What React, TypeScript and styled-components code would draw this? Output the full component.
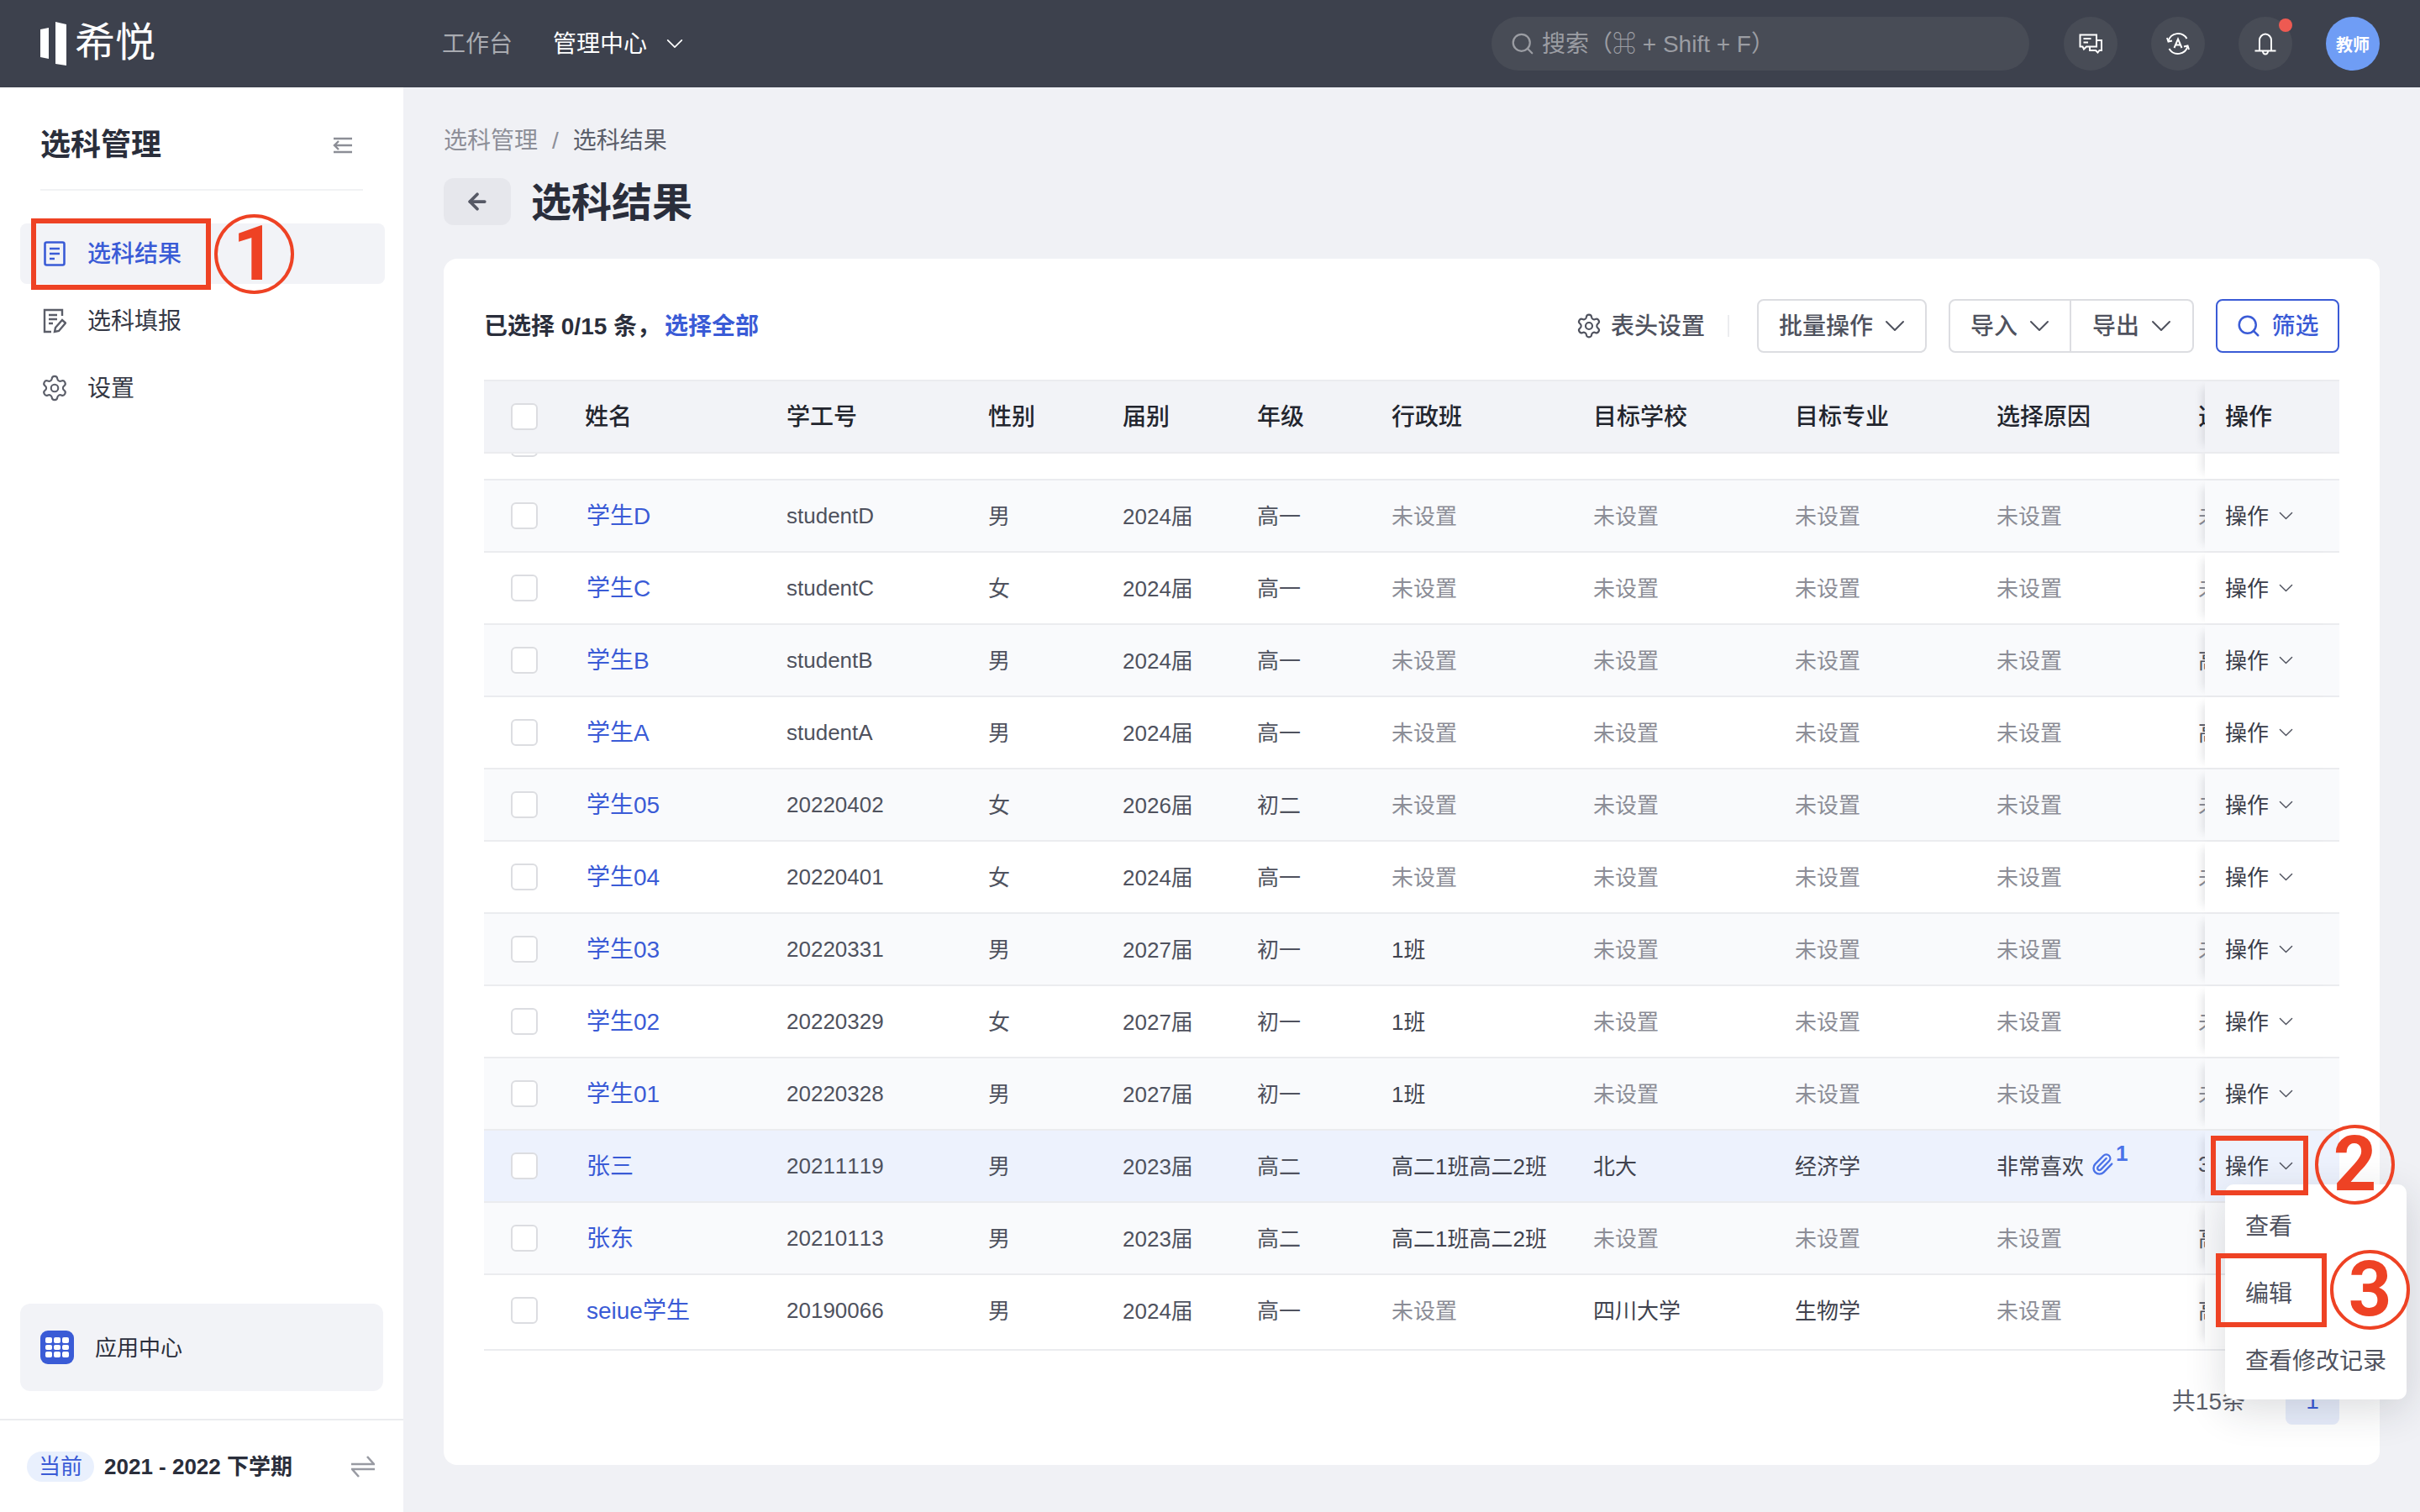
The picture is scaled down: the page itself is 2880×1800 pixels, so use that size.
import React from 'react'
import styled, { createGlobalStyle } from 'styled-components'
import { ArrowLeft, Paperclip, Search, Settings } from 'lucide-react'

const red = '#ee4224'
const blue = '#3a5bd6'
const lineColor = '#ebecef'

const GlobalStyle = createGlobalStyle`
  html, body {
    margin: 0;
    padding: 0;
    height: 100%;
    overflow: hidden;
  }
  body {
    font-family: "Liberation Sans", "Noto Sans CJK SC", sans-serif;
    color: #2a2e3b;
  }
  * {
    box-sizing: border-box;
  }
`

const Page = styled.div`
  position: relative;
  width: 2880px;
  height: 1800px;
  display: flex;
  flex-direction: column;
  overflow: hidden;
  background-color: #f0f1f5;
`

// the CJK fallback sits a little low in a Liberation line box
const Label = styled.span`
  display: block;
  padding-bottom: 4px;
  white-space: nowrap;
`

const TopBar = styled.header`
  flex: 0 0 104px;
  display: flex;
  align-items: center;
  padding-right: 48px;
  background-color: #3d414d;
`

const LogoArea = styled.div`
  flex: 0 0 526px;
  display: flex;
  align-items: center;
  gap: 9px;
  padding-left: 48px;
`

const LogoText = styled.span`
  padding-bottom: 2px;
  font-size: 48px;
  font-weight: 400;
  line-height: 56px;
  color: #fff;
`

const Nav = styled.nav`
  display: flex;
  align-items: center;
  gap: 48px;
`

const NavItem = styled.div<{ $active?: boolean }>`
  display: flex;
  align-items: center;
  gap: 23px;
  font-size: 28px;
  color: ${p => (p.$active ? '#fff' : '#a9abb1')};
`

const SearchBox = styled.div`
  margin-left: auto;
  width: 640px;
  height: 64px;
  display: flex;
  align-items: center;
  gap: 8px;
  padding-left: 22px;
  border-radius: 32px;
  font-size: 28px;
  color: #9b9da3;
  background-color: #484c56;
`

const TopActions = styled.div`
  display: flex;
  align-items: center;
  gap: 40px;
  margin-left: 41px;
`

const RoundButton = styled.div`
  position: relative;
  width: 64px;
  height: 64px;
  display: flex;
  align-items: center;
  justify-content: center;
  border-radius: 50%;
  color: #fff;
  background-color: #484c56;
`

const RedDot = styled.span`
  position: absolute;
  top: 2px;
  right: 0;
  width: 16px;
  height: 16px;
  border-radius: 50%;
  background-color: #ee5a52;
`

const Avatar = styled(RoundButton)`
  font-size: 20px;
  font-weight: 700;
  background-color: #6f9df5;
`

const Content = styled.div`
  flex: 1;
  min-height: 0;
  display: flex;
`

const Sidebar = styled.aside`
  flex: 0 0 480px;
  display: flex;
  flex-direction: column;
  background-color: #fff;
`

const SideHeader = styled.div`
  margin: 44px 48px 0;
  padding: 0 12px 27px 0;
  display: flex;
  align-items: center;
  justify-content: space-between;
  border-bottom: 2px solid #f1f2f4;
  font-size: 36px;
  font-weight: 700;
  line-height: 50px;
`

const SideMenu = styled.div`
  display: flex;
  flex-direction: column;
  gap: 8px;
  margin: 39px 22px 0 24px;
`

const SideItem = styled.div<{ $active?: boolean }>`
  height: 72px;
  display: flex;
  align-items: center;
  gap: 26px;
  padding-left: 28px;
  border-radius: 8px;
  font-size: 28px;
  font-weight: ${p => (p.$active ? 500 : 400)};
  color: ${p => (p.$active ? blue : '#343844')};
  background-color: ${p => (p.$active ? '#f2f3f7' : 'transparent')};
`

const SideIcon = styled.span`
  flex: 0 0 26px;
  width: 26px;
  min-width: 0;
  display: flex;
  justify-content: center;

  svg {
    flex: none;
  }
`

const AppCenter = styled.div`
  margin: auto 24px 33px;
  height: 104px;
  display: flex;
  align-items: center;
  gap: 25px;
  padding-left: 24px;
  border-radius: 12px;
  font-size: 26px;
  background-color: #f2f3f7;
`

const AppCenterIcon = styled.div`
  width: 40px;
  height: 40px;
  display: grid;
  grid-template-columns: repeat(3, 1fr);
  grid-template-rows: repeat(3, 1fr);
  gap: 2px;
  padding: 8px 6px;
  border-radius: 9px;
  background-color: ${blue};
`

const AppCenterDot = styled.span`
  border-radius: 2px;
  background-color: #fff;
`

const TermBar = styled.div`
  height: 111px;
  display: flex;
  align-items: center;
  padding: 0 34px 0 32px;
  border-top: 2px solid ${lineColor};
`

const TermTag = styled.span`
  width: 80px;
  height: 36px;
  display: flex;
  align-items: center;
  justify-content: center;
  margin-right: 12px;
  border-radius: 18px;
  font-size: 26px;
  color: ${blue};
  background-color: #e9f0fd;
`

const TermName = styled(Label)`
  flex: 1;
  font-size: 26px;
  font-weight: 600;
`

const Main = styled.main`
  flex: 1;
  min-width: 0;
  display: flex;
  flex-direction: column;
  padding: 44px 48px 56px;
`

const Breadcrumb = styled.div`
  display: flex;
  gap: 17px;
  height: 40px;
  font-size: 28px;
  line-height: 40px;
  color: #8d8f98;
`

const CrumbCurrent = styled.span`
  color: #5b5e69;
`

const TitleRow = styled.div`
  display: flex;
  align-items: center;
  gap: 24px;
  margin: 24px 0 40px;
`

const BackButton = styled.div`
  width: 80px;
  height: 56px;
  display: flex;
  align-items: center;
  justify-content: center;
  border-radius: 12px;
  color: #565965;
  background-color: #e6e7ec;
`

const Title = styled.h1`
  margin: 0;
  padding-top: 4px;
  font-size: 48px;
  font-weight: 700;
  line-height: 52px;
`

const Card = styled.section`
  flex: 1;
  min-height: 0;
  display: flex;
  flex-direction: column;
  padding: 48px;
  border-radius: 16px;
  background-color: #fff;
`

const Toolbar = styled.div`
  height: 64px;
  display: flex;
  align-items: center;
  margin-bottom: 32px;
`

const Selected = styled(Label)`
  margin-right: auto;
  font-size: 28px;
  font-weight: 600;
`

const LinkText = styled.span`
  margin-left: 5px;
  color: ${blue};
`

const HeaderSettings = styled.div`
  display: flex;
  align-items: center;
  gap: 10px;
  font-size: 28px;
  font-weight: 500;
  color: #4f525e;
`

const ToolDivider = styled.span`
  width: 2px;
  height: 26px;
  margin: 0 33px 0 27px;
  background-color: #ebecef;
`

const OutlineButton = styled.div<{ $width: number; $primary?: boolean }>`
  width: ${p => p.$width}px;
  height: 64px;
  display: flex;
  align-items: center;
  justify-content: center;
  gap: ${p => (p.$primary ? 12 : 14)}px;
  border: 2px solid ${p => (p.$primary ? blue : '#dcdde1')};
  border-radius: 8px;
  font-size: 28px;
  font-weight: 500;
  color: ${p => (p.$primary ? blue : '#4f525e')};
`

const ButtonGroup = styled.div`
  display: flex;
  margin: 0 26px;
`

const GroupButton = styled(OutlineButton)<{ $side: 'left' | 'right' }>`
  border-radius: ${p => (p.$side === 'left' ? '8px 0 0 8px' : '0 8px 8px 0')};
  ${p => (p.$side === 'right' ? 'border-left: none;' : '')}
`

const ChevronSvg = styled.svg<{ $size: number }>`
  flex: none;
  width: ${p => p.$size}px;
  height: ${p => Math.round(p.$size * 0.58)}px;
  fill: none;
  stroke: currentColor;
  stroke-width: 2;
  stroke-linecap: round;
  stroke-linejoin: round;
`

const HeadRow = styled.div`
  height: 88px;
  display: flex;
  border-top: 2px solid ${lineColor};
  border-bottom: 2px solid ${lineColor};
  font-size: 28px;
  font-weight: 500;
  color: #22252e;
  background-color: #f2f3f7;
`

const Cells = styled.div`
  flex: 1;
  min-width: 0;
  height: 100%;
  overflow: hidden;
  display: grid;
  grid-template-columns: 120px 240px 240px 160px 160px 160px 240px 240px 240px 240px 240px;
  align-items: center;
`

const CheckCell = styled.div`
  padding-left: 32px;
`

const CheckBox = styled.span`
  display: block;
  width: 32px;
  height: 32px;
  border: 2px solid #dcdde1;
  border-radius: 6px;
  background-color: #fff;
`

const FixedCell = styled.div`
  flex: 0 0 160px;
  height: 100%;
  display: flex;
  align-items: center;
  gap: 12px;
  padding-left: 24px;
  background-color: inherit;
  box-shadow: -10px 0 10px -8px rgba(30, 35, 50, 0.14);
`

const Body = styled.div`
  overflow: hidden;
`

const Row = styled.div<{ $tone: 'white' | 'gray' | 'active'; $peek?: boolean; $last?: boolean }>`
  height: ${p => (p.$last ? 90 : 86)}px;
  display: flex;
  margin-top: ${p => (p.$peek ? -54 : 0)}px;
  padding-bottom: ${p => (p.$last ? 4 : 0)}px;
  border-bottom: 2px solid ${lineColor};
  font-size: 26px;
  font-kerning: none;
  color: #4f525e;
  background-color: ${p => (p.$tone === 'active' ? '#edf2fd' : p.$tone === 'gray' ? '#f9fafc' : '#fff')};
`

const Cell = styled.div<{ $muted?: boolean; $dark?: boolean; $latin?: boolean }>`
  display: flex;
  align-items: center;
  padding-bottom: ${p => (p.$latin ? 0 : 4)}px;
  white-space: nowrap;
  color: ${p => (p.$muted ? '#8b8d96' : p.$dark ? '#3f424e' : 'inherit')};
`

const NameLink = styled.span`
  padding-left: 2px;
  font-size: 28px;
  color: ${blue};
`

const ClipIcon = styled(Paperclip)`
  margin-left: 8px;
  color: #4a72e8;
`

const ClipCount = styled.span`
  margin-left: 2px;
  font-size: 26px;
  font-weight: 700;
  line-height: 26px;
  color: #4a72e8;
  transform: translateY(-13px);
`

const ActionLabel = styled(Label)`
  color: #3a3d49;
`

const Pagination = styled.div`
  display: flex;
  align-items: center;
  justify-content: flex-end;
  gap: 48px;
  margin-top: auto;
  font-size: 28px;
  color: #5b5e69;
`

const PageButton = styled.div`
  width: 64px;
  height: 56px;
  display: flex;
  align-items: center;
  justify-content: center;
  border-radius: 8px;
  color: ${blue};
  background-color: #e7edfb;
`

const Menu = styled.div`
  position: absolute;
  left: 2648px;
  top: 1410px;
  width: 216px;
  height: 256px;
  display: flex;
  flex-direction: column;
  padding: 10px 0 6px;
  border-radius: 10px;
  font-size: 28px;
  color: #4f525e;
  background-color: #fff;
  box-shadow: 0 12px 48px rgba(30, 35, 50, 0.16);
`

const MenuItem = styled.div`
  height: 80px;
  display: flex;
  align-items: center;
  padding-left: 24px;
`

const MarkBox = styled.div<{ $x: number; $y: number; $w: number; $h: number }>`
  position: absolute;
  left: ${p => p.$x}px;
  top: ${p => p.$y}px;
  width: ${p => p.$w}px;
  height: ${p => p.$h}px;
  border: 6px solid ${red};
`

const MarkCircle = styled.div<{ $x: number; $y: number }>`
  position: absolute;
  left: ${p => p.$x}px;
  top: ${p => p.$y}px;
  width: 95px;
  height: 95px;
  display: flex;
  align-items: center;
  justify-content: center;
  border: 4px solid ${red};
  border-radius: 50%;
  font-family: Roboto, sans-serif;
  font-size: 90px;
  font-weight: 700;
  line-height: 1;
  color: ${red};
`

const Chevron = ({ size }: { size: number }) => (
  <ChevronSvg $size={size} viewBox="0 0 24 14">
    <polyline points="2,2 12,12 22,2" />
  </ChevronSvg>
)

const LogoMark = () => (
  <svg width="32" height="52" viewBox="0 0 32 52" fill="#fff">
    <path d="M0 9 L10 7 V44 L0 42 Z" />
    <path d="M18 0 L31 3 V52 L18 50 Z" />
  </svg>
)

const ChatIcon = () => (
  <svg width="28" height="24" viewBox="0 0 28 24" fill="none" stroke="currentColor" strokeWidth="2">
    <path d="M1.5 1.5 H21 V15.5 H9 L6 18.5 L4.5 15.5 H1.5 Z" />
    <path d="M5.5 6 H14.5 M5.5 10.5 H11" />
    <path d="M21 8 H27 V20 H24.5 L22.5 22.5 L20 20 H13 V15.5" />
  </svg>
)

const AccountIcon = () => (
  <svg width="28" height="28" viewBox="0 0 28 28" fill="none" stroke="currentColor" strokeWidth="2">
    <path d="M2.5 11 A12 12 0 0 1 24.5 8" />
    <path d="M25.5 17 A12 12 0 0 1 3.5 20" />
    <path d="M1 7 L2.5 11.5 L7 10.5" />
    <path d="M27 21 L25.5 16.5 L21 17.5" />
    <path d="M9.5 19 L14 8.5 L18.5 19 M11 15.5 H17" />
  </svg>
)

const BellIcon = () => (
  <svg width="26" height="27" viewBox="0 0 26 27" fill="none" stroke="currentColor" strokeWidth="2">
    <path d="M6 21 V9 A7 7.5 0 0 1 20 9 V21" />
    <path d="M0.5 21.5 H25.5" />
    <path d="M10 22 A3 3.5 0 0 0 16 22" />
  </svg>
)

const CollapseIcon = () => (
  <svg width="24" height="20" viewBox="0 0 24 20" fill="none" stroke="#8c8e96" strokeWidth="2.4">
    <path d="M1 2 H23 M12 10 H23 M1 18 H23" />
    <path d="M7 5 L2 10 L7 15 M2 10 H12" />
  </svg>
)

const ResultIcon = () => (
  <svg width="26" height="30" viewBox="0 0 26 30" fill="none" stroke={blue} strokeWidth="2.6">
    <rect x="1.5" y="1.5" width="23" height="27" rx="2" />
    <path d="M7 9 H19 M7 15 H19 M7 21 H13" />
  </svg>
)

const ReportIcon = () => (
  <svg width="28" height="30" viewBox="0 0 28 30" fill="none" stroke="#5b5e69" strokeWidth="2.4">
    <path d="M23 9 V2 H2 V28 H10" />
    <path d="M7 8 H17 M7 13 H17 M7 18 H12" />
    <path d="M14 28 L15 23 L23 14 L27 17.5 L19 27 Z" />
  </svg>
)

const SwapIcon = () => (
  <svg width="28" height="26" viewBox="0 0 28 26" fill="none" stroke="#989aa2" strokeWidth="2.6">
    <path d="M0 10 H27 L19 1" />
    <path d="M28 16 H1 L9 25" />
  </svg>
)

interface Student {
  name: string
  id: string
  gender: string
  year: string
  grade: string
  klass?: string
  school?: string
  major?: string
  reason?: string
  attach?: boolean
  extra: string
}

const NOT_SET = '未设置'

const students: Student[] = [
  { name: '学生D', id: 'studentD', gender: '男', year: '2024届', grade: '高一', extra: NOT_SET },
  { name: '学生C', id: 'studentC', gender: '女', year: '2024届', grade: '高一', extra: NOT_SET },
  { name: '学生B', id: 'studentB', gender: '男', year: '2024届', grade: '高一', extra: '高一' },
  { name: '学生A', id: 'studentA', gender: '男', year: '2024届', grade: '高一', extra: '高一' },
  { name: '学生05', id: '20220402', gender: '女', year: '2026届', grade: '初二', extra: NOT_SET },
  { name: '学生04', id: '20220401', gender: '女', year: '2024届', grade: '高一', extra: NOT_SET },
  { name: '学生03', id: '20220331', gender: '男', year: '2027届', grade: '初一', klass: '1班', extra: NOT_SET },
  { name: '学生02', id: '20220329', gender: '女', year: '2027届', grade: '初一', klass: '1班', extra: NOT_SET },
  { name: '学生01', id: '20220328', gender: '男', year: '2027届', grade: '初一', klass: '1班', extra: NOT_SET },
  {
    name: '张三', id: '20211119', gender: '男', year: '2023届', grade: '高二', klass: '高二1班高二2班',
    school: '北大', major: '经济学', reason: '非常喜欢', attach: true, extra: '3',
  },
  { name: '张东', id: '20210113', gender: '男', year: '2023届', grade: '高二', klass: '高二1班高二2班', extra: '高二' },
  { name: 'seiue学生', id: '20190066', gender: '男', year: '2024届', grade: '高一', school: '四川大学', major: '生物学', extra: '高一' },
]

const Optional = ({ value }: { value?: string }) => (
  <Cell $muted={!value} $dark={!!value}>{value || NOT_SET}</Cell>
)

const StudentRow = ({ student, tone, last }: {
  student: Student
  tone: 'white' | 'gray' | 'active'
  last?: boolean
}) => (
  <Row $tone={tone} $last={last}>
    <Cells>
      <CheckCell><CheckBox /></CheckCell>
      <Cell><NameLink>{student.name}</NameLink></Cell>
      <Cell $latin>{student.id}</Cell>
      <Cell>{student.gender}</Cell>
      <Cell>{student.year}</Cell>
      <Cell>{student.grade}</Cell>
      <Optional value={student.klass} />
      <Optional value={student.school} />
      <Optional value={student.major} />
      <Cell $muted={!student.reason} $dark={!!student.reason}>
        {student.reason || NOT_SET}
        {student.attach && <ClipIcon size={28} strokeWidth={2} />}
        {student.attach && <ClipCount>1</ClipCount>}
      </Cell>
      <Cell $muted={student.extra === NOT_SET}>{student.extra}</Cell>
    </Cells>
    <FixedCell>
      <ActionLabel>操作</ActionLabel>
      <Chevron size={17} />
    </FixedCell>
  </Row>
)

// the row scrolled almost out of view under the table head: only its checkbox and name tip show
const ScrolledRow = () => (
  <Row $tone="white" $peek>
    <Cells>
      <CheckCell><CheckBox /></CheckCell>
      <Cell><NameLink>学生E</NameLink></Cell>
    </Cells>
    <FixedCell />
  </Row>
)

export default function App() {
  return (
    <Page>
      <GlobalStyle />
      <TopBar>
        <LogoArea>
          <LogoMark />
          <LogoText>希悦</LogoText>
        </LogoArea>
        <Nav>
          <NavItem><Label>工作台</Label></NavItem>
          <NavItem $active><Label>管理中心</Label><Chevron size={20} /></NavItem>
        </Nav>
        <SearchBox>
          <Search size={30} strokeWidth={1.8} />
          <Label>搜索（⌘ + Shift + F）</Label>
        </SearchBox>
        <TopActions>
          <RoundButton><ChatIcon /></RoundButton>
          <RoundButton><AccountIcon /></RoundButton>
          <RoundButton><BellIcon /><RedDot /></RoundButton>
          <Avatar>教师</Avatar>
        </TopActions>
      </TopBar>
      <Content>
        <Sidebar>
          <SideHeader>
            选科管理
            <CollapseIcon />
          </SideHeader>
          <SideMenu>
            <SideItem $active><SideIcon><ResultIcon /></SideIcon><Label>选科结果</Label></SideItem>
            <SideItem><SideIcon><ReportIcon /></SideIcon><Label>选科填报</Label></SideItem>
            <SideItem>
              <SideIcon><Settings size={34} strokeWidth={1.5} color="#5b5e69" /></SideIcon>
              <Label>设置</Label>
            </SideItem>
          </SideMenu>
          <AppCenter>
            <AppCenterIcon>
              {Array.from({ length: 9 }, (_, i) => <AppCenterDot key={i} />)}
            </AppCenterIcon>
            <Label>应用中心</Label>
          </AppCenter>
          <TermBar>
            <TermTag><Label>当前</Label></TermTag>
            <TermName>2021 - 2022 下学期</TermName>
            <SwapIcon />
          </TermBar>
        </Sidebar>
        <Main>
          <Breadcrumb>
            选科管理
            <span>/</span>
            <CrumbCurrent>选科结果</CrumbCurrent>
          </Breadcrumb>
          <TitleRow>
            <BackButton><ArrowLeft size={30} strokeWidth={3} /></BackButton>
            <Title>选科结果</Title>
          </TitleRow>
          <Card>
            <Toolbar>
              <Selected>已选择 0/15 条，<LinkText>选择全部</LinkText></Selected>
              <HeaderSettings>
                <Settings size={32} strokeWidth={1.6} />
                <Label>表头设置</Label>
              </HeaderSettings>
              <ToolDivider />
              <OutlineButton $width={202}><Label>批量操作</Label><Chevron size={24} /></OutlineButton>
              <ButtonGroup>
                <GroupButton $side="left" $width={146}><Label>导入</Label><Chevron size={24} /></GroupButton>
                <GroupButton $side="right" $width={146}><Label>导出</Label><Chevron size={24} /></GroupButton>
              </ButtonGroup>
              <OutlineButton $width={147} $primary><Search size={30} strokeWidth={2} /><Label>筛选</Label></OutlineButton>
            </Toolbar>
            <HeadRow>
              <Cells>
                <CheckCell><CheckBox /></CheckCell>
                <Label>姓名</Label>
                <Label>学工号</Label>
                <Label>性别</Label>
                <Label>届别</Label>
                <Label>年级</Label>
                <Label>行政班</Label>
                <Label>目标学校</Label>
                <Label>目标专业</Label>
                <Label>选择原因</Label>
                <Label>选科组合</Label>
              </Cells>
              <FixedCell><Label>操作</Label></FixedCell>
            </HeadRow>
            <Body>
              <ScrolledRow />
              {students.map((student, i) => (
                <StudentRow
                  key={student.name}
                  student={student}
                  tone={student.attach ? 'active' : i % 2 === 0 ? 'gray' : 'white'}
                  last={i === students.length - 1}
                />
              ))}
            </Body>
            <Pagination>
              <Label>共15条</Label>
              <PageButton>1</PageButton>
            </Pagination>
          </Card>
        </Main>
      </Content>
      <Menu>
        <MenuItem><Label>查看</Label></MenuItem>
        <MenuItem><Label>编辑</Label></MenuItem>
        <MenuItem><Label>查看修改记录</Label></MenuItem>
      </Menu>
      <MarkBox $x={37} $y={260} $w={214} $h={85} />
      <MarkCircle $x={255} $y={255}>1</MarkCircle>
      <MarkBox $x={2631} $y={1352} $w={116} $h={71} />
      <MarkCircle $x={2755} $y={1339}>2</MarkCircle>
      <MarkBox $x={2637} $y={1492} $w={132} $h={88} />
      <MarkCircle $x={2773} $y={1488}>3</MarkCircle>
    </Page>
  )
}
